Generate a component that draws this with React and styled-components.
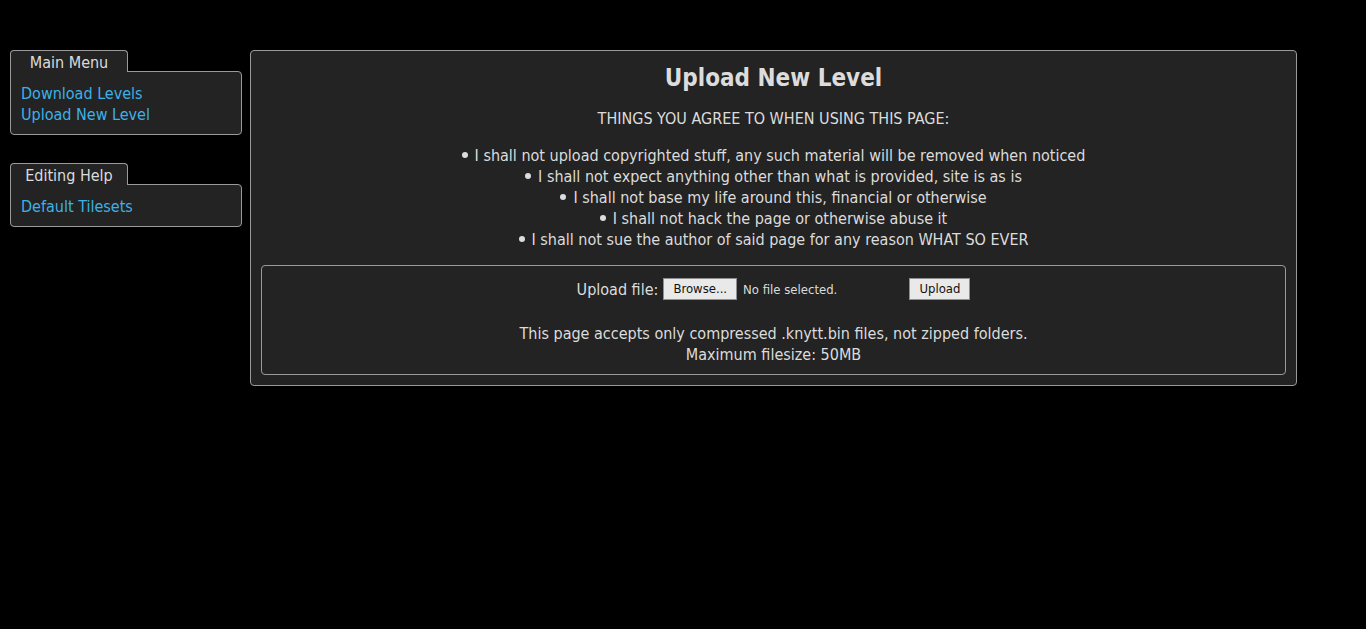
import React from "react";
import styled, { createGlobalStyle } from "styled-components";

const Global = createGlobalStyle`
  html, body {
    margin: 0;
    padding: 0;
    background: #000;
  }
  body {
    font-family: "DejaVu Sans Condensed", "DejaVu Sans", "Liberation Sans", sans-serif;
    font-size: 16px;
    color: #dcdcdc;
  }
`;

const Page = styled.div`
  display: flex;
  align-items: flex-start;
  gap: 8px;
  padding: 50px 0 0 10px;
  width: 1287px;
`;

const Sidebar = styled.div`
  width: 232px;
  display: flex;
  flex-direction: column;
  gap: 28px;
  flex: none;
`;

const Group = styled.div`
  display: flex;
  flex-direction: column;
`;

const Tab = styled.div`
  position: relative;
  z-index: 1;
  box-sizing: border-box;
  width: 118px;
  height: 22px;
  margin-bottom: -1px;
  border: 1px solid #9a9a9a;
  border-bottom: none;
  border-radius: 4px 4px 0 0;
  background: #232323;
  color: #dcdcdc;
  text-align: center;
  line-height: 23px;
`;

const Box = styled.div`
  box-sizing: border-box;
  border: 1px solid #9a9a9a;
  border-radius: 0 4px 4px 4px;
  background: #232323;
  padding: 11px 10px 9px;
  display: flex;
  flex-direction: column;
`;

const Link = styled.a`
  color: #3eb1e6;
  text-decoration: none;
  line-height: 21px;
  cursor: pointer;
`;

const Main = styled.div`
  flex: 1;
  box-sizing: border-box;
  border: 1px solid #9a9a9a;
  border-radius: 4px;
  background: #232323;
  padding: 12px 10px 10px;
  text-align: center;
`;

const Title = styled.h1`
  margin: 0;
  font-size: 24px;
  font-weight: bold;
  line-height: 30px;
  color: #dcdcdc;
`;

const Lead = styled.p`
  margin: 15px 0 0;
  line-height: 21px;
`;

const Rules = styled.ul`
  list-style: none;
  margin: 16px 0 0;
  padding: 0;
`;

const Rule = styled.li`
  line-height: 21px;
`;

const Bullet = styled.span`
  display: inline-block;
  width: 6px;
  height: 6px;
  margin-right: 7px;
  border-radius: 50%;
  background: #dcdcdc;
  vertical-align: 3px;
`;

const UploadBox = styled.div`
  margin-top: 15px;
  border: 1px solid #9a9a9a;
  border-radius: 4px;
  padding: 11px 10px 9px;
`;

const UploadRow = styled.div`
  display: flex;
  justify-content: center;
  align-items: center;
  height: 24px;
`;

const Label = styled.span`
  margin-right: 5px;
`;

const FileField = styled.span`
  display: inline-flex;
  align-items: center;
  width: 246px;
`;

const Button = styled.button`
  box-sizing: border-box;
  height: 22px;
  padding: 0 9px;
  background: #e9e9e9;
  border: 1px solid #8f8f8f;
  border-radius: 0;
  color: #111;
  font-family: inherit;
  font-size: 13px;
  line-height: 20px;
`;

const FileName = styled.span`
  margin-left: 6px;
  font-size: 13px;
`;

const Note = styled.p`
  margin: 0;
  line-height: 21px;
  &:first-of-type {
    margin-top: 22px;
  }
`;

const rules = [
  "I shall not upload copyrighted stuff, any such material will be removed when noticed",
  "I shall not expect anything other than what is provided, site is as is",
  "I shall not base my life around this, financial or otherwise",
  "I shall not hack the page or otherwise abuse it",
  "I shall not sue the author of said page for any reason WHAT SO EVER",
];

export default function App() {
  return (
    <>
      <Global />
      <Page>
        <Sidebar>
          <Group>
            <Tab>Main Menu</Tab>
            <Box>
              <Link>Download Levels</Link>
              <Link>Upload New Level</Link>
            </Box>
          </Group>
          <Group>
            <Tab>Editing Help</Tab>
            <Box>
              <Link>Default Tilesets</Link>
            </Box>
          </Group>
        </Sidebar>
        <Main>
          <Title>Upload New Level</Title>
          <Lead>THINGS YOU AGREE TO WHEN USING THIS PAGE:</Lead>
          <Rules>
            {rules.map((r) => (
              <Rule key={r}>
                <Bullet />
                {r}
              </Rule>
            ))}
          </Rules>
          <UploadBox>
            <UploadRow>
              <Label>Upload file:</Label>
              <FileField>
                <Button type="button">Browse...</Button>
                <FileName>No file selected.</FileName>
              </FileField>
              <Button type="button">Upload</Button>
            </UploadRow>
            <div>
              <Note>This page accepts only compressed .knytt.bin files, not zipped folders.</Note>
              <Note>Maximum filesize: 50MB</Note>
            </div>
          </UploadBox>
        </Main>
      </Page>
    </>
  );
}
